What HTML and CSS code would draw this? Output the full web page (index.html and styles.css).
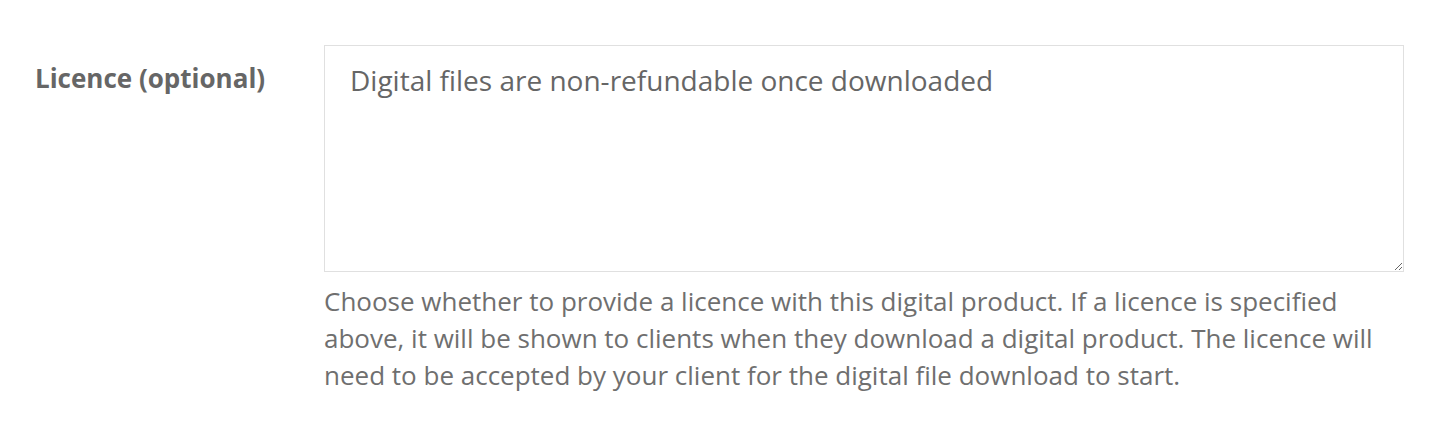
FILE: index.html
```
<!DOCTYPE html>
<html lang="en">
<head>
    <meta charset="UTF-8">
    <title>Licence</title>
    <link rel="stylesheet" href="styles.css">
</head>
<body>
    <div class="form-row">
        <label class="form-label" for="licence">Licence (optional)</label>
        <div class="form-field">
            <textarea id="licence" class="form-textarea">Digital files are non-refundable once downloaded</textarea>
            <p class="form-help">Choose whether to provide a licence with this digital product. If a licence is specified above, it will be shown to clients when they download a digital product. The licence will need to be accepted by your client for the digital file download to start.</p>
        </div>
    </div>
</body>
</html>
```

FILE: styles.css
```
body {
    margin: 0;
    background: #fff;
    font-family: "Open Sans", sans-serif;
    color: #666;
}
.form-row {
    display: flex;
    padding: 45px 0 0 35px;
}
.form-label {
    width: 289px;
    flex-shrink: 0;
    font-size: 26px;
    font-weight: 700;
    color: #666;
    padding-top: 15px;
    line-height: 36px;
}
.form-field {
    width: 1080px;
}
.form-textarea {
    display: block;
    box-sizing: border-box;
    width: 1080px;
    height: 227px;
    margin: 0;
    padding: 15px 24px 13px 25px;
    border: 1px solid #e0e0e0;
    font-family: "Open Sans", sans-serif;
    font-size: 28px;
    line-height: 38px;
    color: #666;
    resize: vertical;
    outline: none;
}
.form-help {
    margin: 11px 0 0;
    font-size: 26px;
    line-height: 37px;
    color: #6f6f6f;
}
```
